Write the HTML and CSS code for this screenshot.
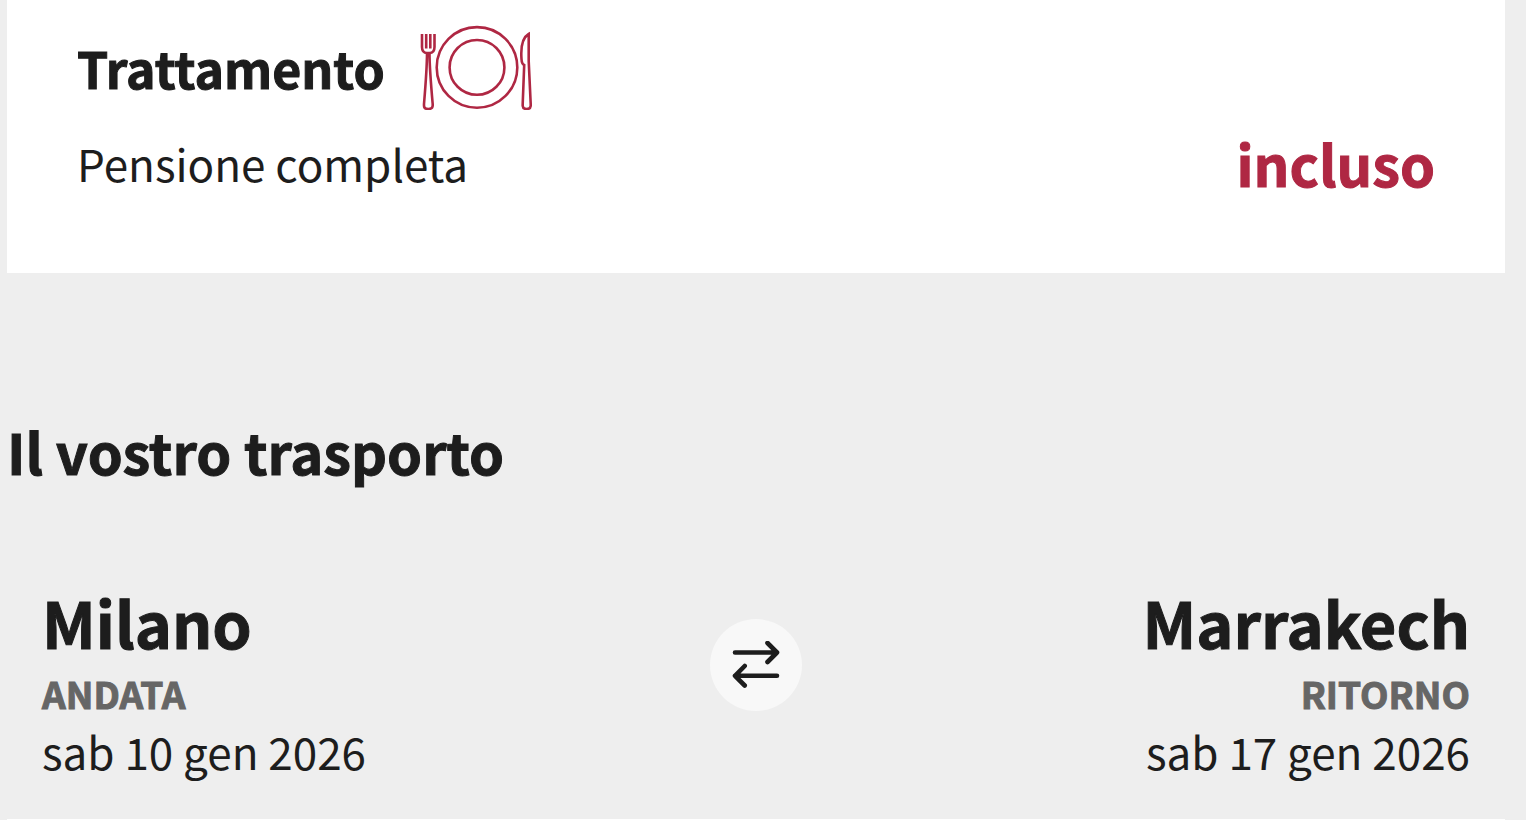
FILE: index.html
```
<!DOCTYPE html>
<html lang="it">
<head>
    <meta charset="UTF-8">
    <meta name="viewport" content="width=device-width, initial-scale=1.0">
    <title>Il vostro viaggio</title>
    <link rel="stylesheet" href="styles.css">
</head>
<body>
<main>
    <section class="card">
        <div class="card-title">
            <h3>Trattamento</h3>
            <svg class="plate" viewBox="0 -2 112 86" aria-hidden="true">
                <circle cx="57" cy="41.400" r="40.300"/>
                <circle cx="57" cy="41.400" r="27.400"/>
                <!-- forchetta -->
                <path d="M2 8v13q0 6 5 6h2.500q5 0 5-6V8M6.200 8v14.500M10.300 8v14.500"/>
                <path d="M7 27Q7 42 4 78v1.500q0 3.500 4.300 3.500t4.400-3.500V78Q9.500 42 9.500 27"/>
                <!-- coltello -->
                <path d="M108.700 8v27l2 43v2q-.2 3-4 3t-4-3v-2l1.500-39q-2.500-1-2.700-6-1.500-20 7.200-25z"/>
            </svg>
        </div>
        <div class="card-row">
            <p class="text">Pensione completa</p>
            <strong class="price">incluso</strong>
        </div>
    </section>

    <h2>Il vostro trasporto</h2>

    <section class="route">
        <div class="stop">
            <p class="city">Milano</p>
            <p class="label">ANDATA</p>
            <p class="text">sab 10 gen 2026</p>
        </div>
        <div class="swap">
            <svg viewBox="0 0 48 48" aria-hidden="true">
                <path d="M3 11.500h42M35.500 2l9.500 9.500-9.500 9.500M45 34.800H3M12.700 25L3 34.800l9.700 9.700"/>
            </svg>
        </div>
        <div class="stop stop-right">
            <p class="city">Marrakech</p>
            <p class="label">RITORNO</p>
            <p class="text">sab 17 gen 2026</p>
        </div>
    </section>

    <section class="details"></section>
</main>
</body>
</html>
```

FILE: styles.css
```
* {
    box-sizing: border-box;
}

body {
    margin: 0;
    background-color: #eeeeee;
    color: #1d1d1d;
    font-family: "Noto Sans CJK SC", "Open Sans", sans-serif;
}

main {
    display: flex;
    flex-direction: column;
    min-height: 100vh;
    padding: 0 21px 0 7px;
}

h2, h3, p {
    margin: 0;
}

h2, h3, .price, .city, .label {
    font-weight: bold;
    -webkit-text-stroke: 1px currentColor;
}

.card {
    background-color: #ffffff;
    padding: 23px 70px 74px;
}

.card-title {
    display: flex;
    align-items: center;
    gap: 35px;
}

h3 {
    font-size: 50px;
    line-height: 88px;
}

.plate {
    width: 112px;
    height: 86px;
    fill: none;
    stroke: #af2743;
    stroke-width: 2.6;
}

.card-row {
    display: flex;
    justify-content: space-between;
    align-items: center;
    padding-top: 16px;
}

.text {
    font-size: 44px;
    line-height: 60px;
}

.price {
    color: #af2743;
    font-size: 56px;
    line-height: 72px;
}

h2 {
    font-size: 56px;
    line-height: 72px;
    margin-top: 142px;
}

.route {
    display: flex;
    justify-content: space-between;
    align-items: flex-start;
    padding: 91px 35px 38px;
}

.stop {
    flex: 1;
}

.stop-right {
    text-align: right;
}

.city {
    font-size: 63px;
    line-height: 88px;
}

.label {
    color: #666666;
    font-size: 37px;
    line-height: 55px;
}

.swap {
    display: flex;
    align-items: center;
    justify-content: center;
    width: 92px;
    height: 92px;
    margin-top: 41px;
    border-radius: 50%;
    background-color: #f8f8f8;
}

.swap svg {
    width: 48px;
    height: 48px;
    fill: none;
    stroke: #1d1d1d;
    stroke-width: 4.6;
    stroke-linecap: round;
    stroke-linejoin: round;
}

.details {
    flex: 1;
    background-color: #ffffff;
}
```
